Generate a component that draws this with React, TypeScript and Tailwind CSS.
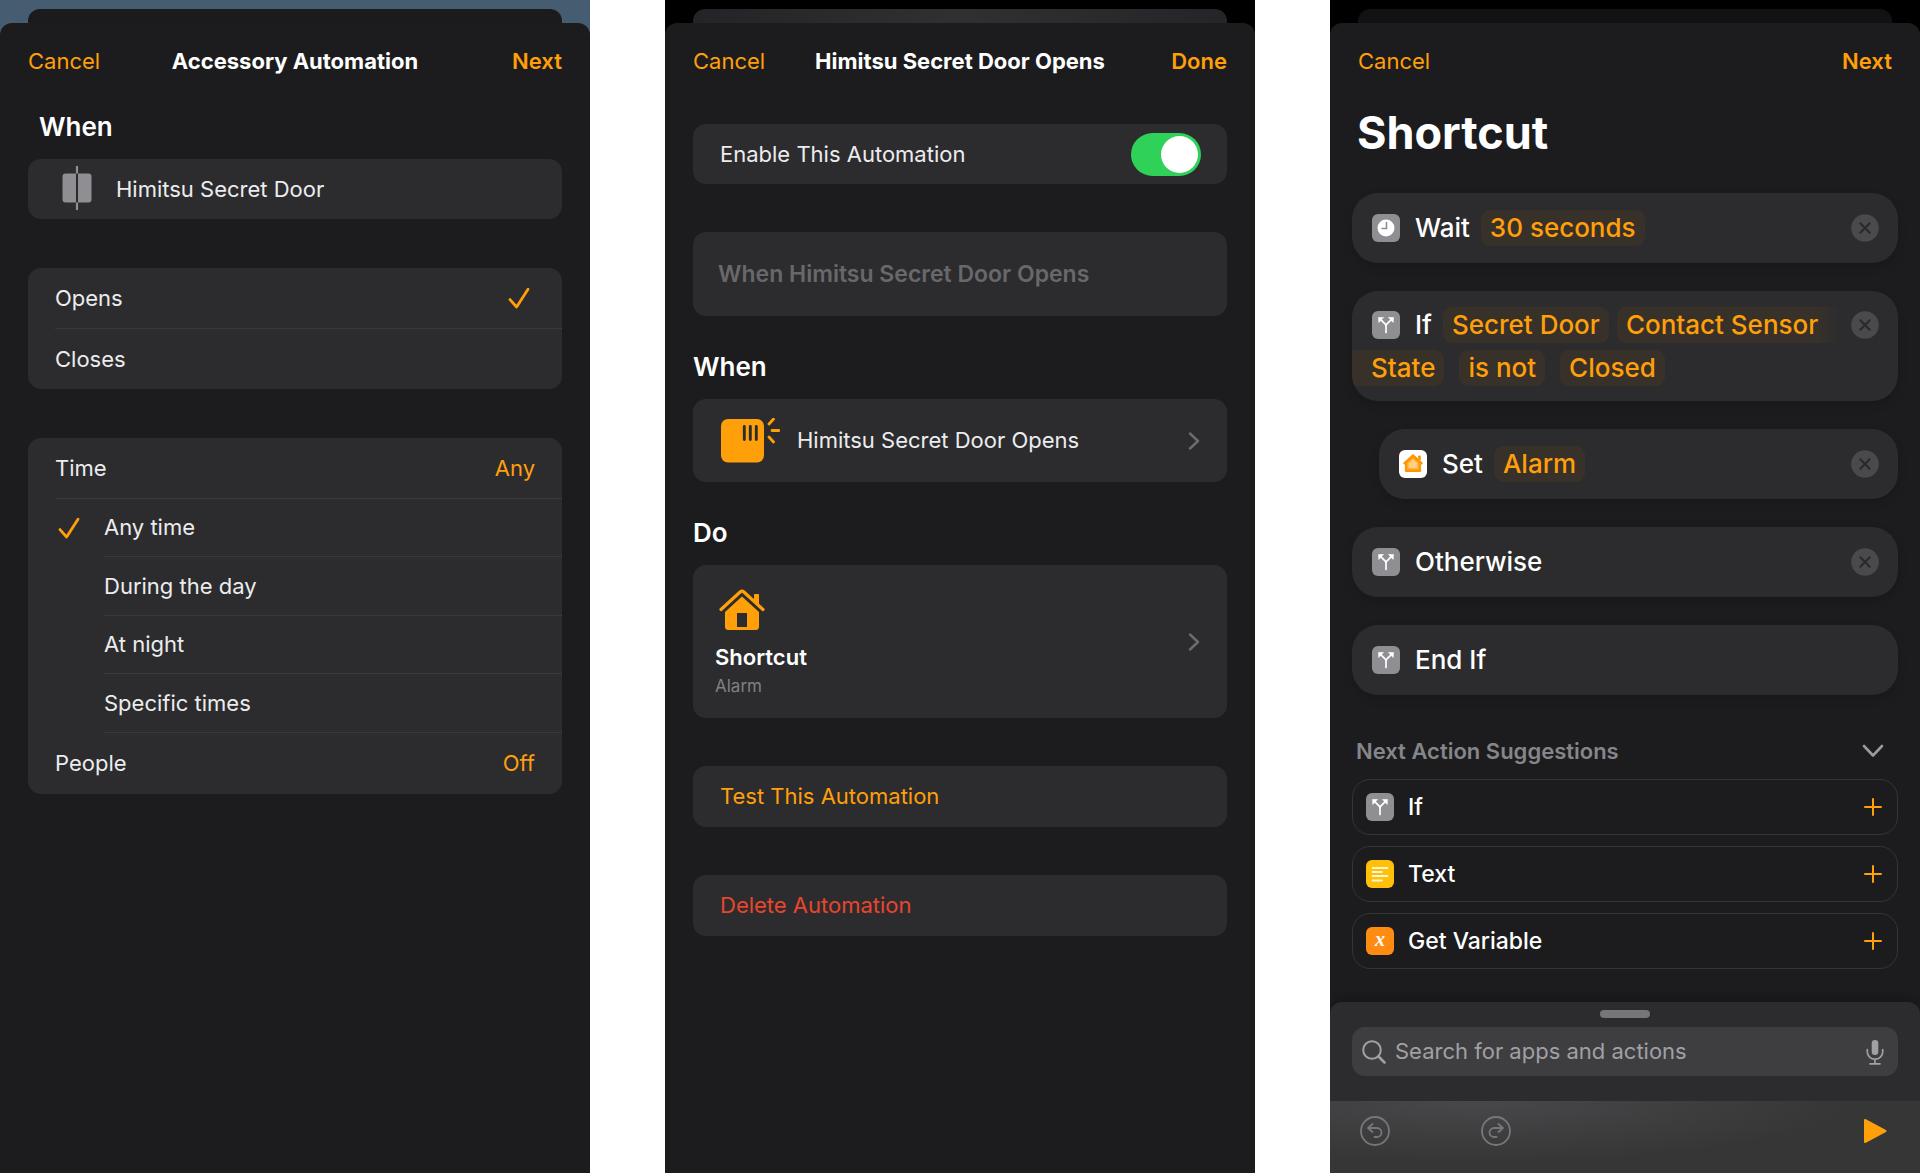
import type { ReactNode } from 'react'

type Backdrop = 'blue' | 'slate' | 'black'

const backdropStyles: Record<Backdrop, { page: string; behind: string }> = {
  blue: { page: 'bg-[#465c70]', behind: 'bg-[#1b1b1d]' },
  slate: { page: 'bg-black', behind: 'bg-linear-to-r from-[#232427] via-[#303031] to-[#232528]' },
  black: { page: 'bg-black', behind: 'bg-[#121213]' },
}

function Phone({ backdrop, children }: { backdrop: Backdrop; children: ReactNode }) {
  const style = backdropStyles[backdrop]
  return (
    <section className={`flex min-h-screen flex-col pt-[9px] ${style.page}`}>
      <div className={`mx-7 h-[14px] rounded-t-xl ${style.behind}`} />
      <div className="flex flex-1 flex-col rounded-t-xl bg-[#1c1c1e]">{children}</div>
    </section>
  )
}

function SheetHeader({ title, action }: { title?: string; action: string }) {
  return (
    <header className="grid h-[76px] grid-cols-[1fr_auto_1fr] items-center px-7 text-[22px]">
      <button className="justify-self-start text-[#ff9f0a]">Cancel</button>
      <h1 className="font-bold text-white">{title}</h1>
      <button className="justify-self-end font-semibold text-[#ff9f0a]">{action}</button>
    </header>
  )
}

function Card({ className = '', children }: { className?: string; children: ReactNode }) {
  return <div className={`overflow-hidden rounded-[13px] bg-[#2c2c2e] ${className}`}>{children}</div>
}

function CheckIcon({ className = '' }: { className?: string }) {
  return (
    <svg viewBox="0 0 22 22" className={`size-[22px] shrink-0 ${className}`} fill="none" stroke="#ff9f0a" strokeWidth="2.8" strokeLinecap="round" strokeLinejoin="round" aria-hidden="true">
      <path d="M2 12.6 8.600 20 20 2.200" />
    </svg>
  )
}

function ChevronRight() {
  return (
    <svg viewBox="0 0 12 18" className="h-[18px] w-3 shrink-0" fill="none" stroke="#6c6c70" strokeWidth="2.4" strokeLinecap="round" strokeLinejoin="round" aria-hidden="true">
      <path d="M2 1.5 10 9l-8 7.500" />
    </svg>
  )
}

function DoorIcon() {
  return (
    <svg viewBox="0 0 30 50" className="h-[50px] w-[30px] shrink-0" aria-hidden="true">
      <path d="M3.500 9.500H14v29H3.500a3 3 0 0 1-3-3v-23a3 3 0 0 1 3-3ZM16 9.500h10.500a3 3 0 0 1 3 3v23a3 3 0 0 1-3 3H16Z" fill="#8e8e93" />
      <path d="M15 2v7.500M15 38.500V46" stroke="#8e8e93" strokeWidth="2.200" />
    </svg>
  )
}

function SensorIcon() {
  return (
    <svg viewBox="0 0 60 46" className="h-[46px] w-[60px] shrink-0" aria-hidden="true">
      <rect x="1" y="1" width="43" height="43.500" rx="7" fill="#ff9f0a" />
      <path d="M24.300 8.500v13M30.300 8.500v13M36.300 8.500v13" stroke="#2c2c2e" strokeWidth="2.900" strokeLinecap="round" />
      <path d="m49 6 4.500-5M52 12.500h7M49 19l4.500 5" stroke="#ff9f0a" strokeWidth="2.800" strokeLinecap="round" />
    </svg>
  )
}

function HouseIcon() {
  return (
    <svg viewBox="0 0 46 42" className="h-[42px] w-[46px]" aria-hidden="true">
      <path d="M2 20.500 21.400 2.800a2.400 2.400 0 0 1 3.200 0L44 20.500" fill="none" stroke="#ff9f0a" strokeWidth="3.200" strokeLinecap="round" strokeLinejoin="round" />
      <path d="M35.500 5.500h4V17l-4-3.700Z" fill="#ff9f0a" stroke="#ff9f0a" strokeLinejoin="round" />
      <path fillRule="evenodd" d="M23 7.500 40 23v14.500a3.500 3.500 0 0 1-3.500 3.500h-27A3.500 3.500 0 0 1 6 37.500V23ZM18 24v14h10V24Z" fill="#ff9f0a" />
    </svg>
  )
}

function Tile({ className, children }: { className: string; children: ReactNode }) {
  return (
    <svg viewBox="0 0 28 28" className={`size-7 shrink-0 rounded-md ${className}`} aria-hidden="true">
      {children}
    </svg>
  )
}

function ClockTile() {
  return (
    <Tile className="bg-[#8e8e93]">
      <circle cx="14" cy="14" r="8.500" fill="#fff" />
      <path d="M14.500 8.500v6H10" fill="none" stroke="#8e8e93" strokeWidth="1.600" strokeLinecap="round" />
    </Tile>
  )
}

function BranchTile() {
  return (
    <Tile className="bg-[#8e8e93]">
      <path d="M14 21.500v-6.300c0-1-.4-1.800-1-2.400L9 8.800M14 15.200c0-1 .4-1.800 1-2.400l4-4" fill="none" stroke="#fff" strokeWidth="1.700" strokeLinecap="round" />
      <path d="M6.500 6.500h5l-4.700 5ZM21.500 6.500h-5l4.700 5Z" fill="#fff" stroke="#fff" strokeWidth=".6" strokeLinejoin="round" />
    </Tile>
  )
}

function HomeTile() {
  return (
    <Tile className="bg-white">
      <path d="M14 4.500 23.500 13l-1 1.200h-.9v7.300H6.400v-7.300h-.9l-1-1.200ZM19.500 6h1.800v4l-1.800-1.500Z" fill="#ff9500" stroke="#ff9500" strokeLinejoin="round" />
      <path d="m14 7.800 5.800 5.200v6.500H8.200V13Z" fill="#ffb340" />
      <path d="m14 9.500 4.300 4v4.500H9.700v-4.500Z" fill="#ffd080" />
    </Tile>
  )
}

function TextTile() {
  return (
    <Tile className="bg-[#ffc00a]">
      <path d="M6.500 8h15M6.500 12h9.500M6.500 16h15M6.500 20.500h9.500" stroke="#fff5cf" strokeWidth="1.800" strokeLinecap="round" />
    </Tile>
  )
}

function VariableTile() {
  return (
    <span className="flex size-7 shrink-0 items-center justify-center rounded-md bg-[#ff8c12] pb-1 font-['Liberation_Serif',serif] text-[20px] leading-none font-bold text-white italic">
      x
    </span>
  )
}

function CloseButton({ label }: { label: string }) {
  return (
    <button aria-label={label} className="ml-auto size-7 shrink-0">
      <svg viewBox="0 0 28 28" className="size-7" aria-hidden="true">
        <circle cx="14" cy="14" r="13.800" fill="#4a4a4d" />
        <path d="m9.300 9.300 9.400 9.400M18.700 9.300l-9.400 9.400" stroke="#29292b" strokeWidth="2" strokeLinecap="round" />
      </svg>
    </button>
  )
}

function SectionTitle({ className = '', children }: { className?: string; children: ReactNode }) {
  return <h2 className={`mb-4 text-[26px] leading-8 font-semibold text-white ${className}`}>{children}</h2>
}

function AccessoryAutomation() {
  return (
    <Phone backdrop="blue">
      <SheetHeader title="Accessory Automation" action="Next" />
      <main className="px-7 text-[22px] text-[#ececee]">
        <SectionTitle className="mt-3 ml-[11px]">When</SectionTitle>
        <Card className="flex h-[60px] items-center gap-6 pl-[34px]">
          <DoorIcon />
          <span>Himitsu Secret Door</span>
        </Card>

        <Card className="mt-[49px] pl-[27px]">
          {['Opens', 'Closes'].map((name) => (
            <label key={name} className="flex h-[60px] items-center justify-between border-[#39393b] pr-7 not-first:h-[61px] not-first:border-t">
              {name}
              <input type="radio" name="trigger" defaultChecked={name === 'Opens'} className="peer sr-only" />
              <CheckIcon className="invisible mr-1 peer-checked:visible" />
            </label>
          ))}
        </Card>

        <Card className="mt-[49px] pl-[27px]">
          <div className="flex h-[61px] items-center justify-between border-b border-[#39393b] pr-[27px]">
            <span>Time</span>
            <button className="text-[#ff9f0a]">Any</button>
          </div>
          {['Any time', 'During the day', 'At night', 'Specific times'].map((name) => (
            <label key={name} className="flex h-[59px] items-center even:h-[58px]">
              <input type="radio" name="time" defaultChecked={name === 'Any time'} className="peer sr-only" />
              <CheckIcon className="invisible ml-[3px] peer-checked:visible" />
              <span className="ml-6 flex h-full flex-1 items-center border-b border-[#39393b]">{name}</span>
            </label>
          ))}
          <div className="flex h-[61px] items-center justify-between pr-[27px]">
            <span>People</span>
            <button className="text-[#ff9f0a]">Off</button>
          </div>
        </Card>
      </main>
    </Phone>
  )
}

function AutomationDetails() {
  return (
    <Phone backdrop="slate">
      <SheetHeader title="Himitsu Secret Door Opens" action="Done" />
      <main className="px-7 pt-[25px] text-[22px] text-[#ececee]">
        <Card>
          <label className="flex h-[60px] items-center justify-between pr-[26px] pl-[27px]">
            Enable This Automation
            <input type="checkbox" role="switch" defaultChecked className="peer sr-only" />
            <span className="flex h-[43px] w-[70px] items-center justify-end rounded-full bg-[#30d158] p-[3px]">
              <span className="size-[37px] rounded-full bg-white" />
            </span>
          </label>
        </Card>

        <Card className="mt-12">
          <input
            aria-label="Automation name"
            placeholder="When Himitsu Secret Door Opens"
            className="block h-[84px] w-full bg-transparent px-[25px] text-[23px] font-semibold outline-none placeholder:text-[#68686b]"
          />
        </Card>

        <SectionTitle className="mt-[35px]">When</SectionTitle>
        <Card>
          <button className="flex h-[83px] w-full items-center pr-[27px] pl-[27px] text-left">
            <SensorIcon />
            <span className="ml-[17px] flex-1">Himitsu Secret Door Opens</span>
            <ChevronRight />
          </button>
        </Card>

        <SectionTitle className="mt-[35px]">Do</SectionTitle>
        <Card>
          <button className="flex h-[153px] w-full items-center justify-between pr-[27px] pl-[22px] text-left">
            <span className="flex flex-col pt-1">
              <span className="ml-1">
                <HouseIcon />
              </span>
              <span className="mt-[10px] leading-8 font-semibold text-white">Shortcut</span>
              <span className="text-[17px] leading-[26px] text-[#808084]">Alarm</span>
            </span>
            <ChevronRight />
          </button>
        </Card>

        <Card className="mt-12">
          <button className="block h-[61px] w-full px-[27px] text-left text-[#ff9f0a]">Test This Automation</button>
        </Card>
        <Card className="mt-12">
          <button className="block h-[61px] w-full px-[27px] text-left text-[#e8452f]">Delete Automation</button>
        </Card>
      </main>
    </Phone>
  )
}

function Chip({ className = 'rounded-[9px] bg-[#38312a] px-[9px]', children }: { className?: string; children: ReactNode }) {
  return <button className={`h-9 shrink-0 leading-9 whitespace-nowrap text-[#ff9f0a] ${className}`}>{children}</button>
}

function Action({ className = 'py-[17px]', children }: { className?: string; children: ReactNode }) {
  return (
    <li className={`overflow-hidden rounded-[26px] bg-[#2c2c2e] pr-[19px] pl-5 leading-9 shadow-[0_4px_10px_rgba(0,0,0,0.15)] ${className}`}>
      {children}
    </li>
  )
}

const suggestions = [
  { name: 'If', tile: <BranchTile /> },
  { name: 'Text', tile: <TextTile /> },
  { name: 'Get Variable', tile: <VariableTile /> },
]

function ShortcutEditor() {
  return (
    <Phone backdrop="black">
      <SheetHeader action="Next" />
      <main className="px-[22px]">
        <h2 className="mb-[26px] ml-[5px] text-[45px] leading-[68px] font-bold text-white">Shortcut</h2>

        <ul className="flex flex-col gap-7 text-[26px] font-medium text-white">
          <Action>
            <div className="flex h-9 items-center">
              <ClockTile />
              <span className="mr-[11px] ml-[15px]">Wait</span>
              <Chip>30 seconds</Chip>
              <CloseButton label="Remove Wait" />
            </div>
          </Action>
          <Action className="pt-4 pb-[15px]">
            <div className="flex h-9 items-center">
              <BranchTile />
              <span className="mr-[11px] ml-[15px]">If</span>
              <Chip>Secret Door</Chip>
              <Chip className="ml-2 flex-1 rounded-l-[9px] bg-linear-to-r from-[#38312a] from-90% to-[#2c2c2e] px-[9px] text-left">
                Contact Sensor
              </Chip>
              <span className="w-3" />
              <CloseButton label="Remove If" />
            </div>
            <div className="mt-[7px] -ml-5 flex items-center gap-[15px]">
              <Chip className="rounded-r-[9px] bg-[#38312a] pr-[9px] pl-[19px]">State</Chip>
              <Chip>is not</Chip>
              <Chip>Closed</Chip>
            </div>
          </Action>
          <Action className="ml-[27px] py-[17px]">
            <div className="flex h-9 items-center">
              <HomeTile />
              <span className="mr-[11px] ml-[15px]">Set</span>
              <Chip>Alarm</Chip>
              <CloseButton label="Remove Set" />
            </div>
          </Action>
          <Action>
            <div className="flex h-9 items-center">
              <BranchTile />
              <span className="ml-[15px]">Otherwise</span>
              <CloseButton label="Remove Otherwise" />
            </div>
          </Action>
          <Action>
            <div className="flex h-9 items-center">
              <BranchTile />
              <span className="ml-[15px]">End If</span>
            </div>
          </Action>
        </ul>

        <button className="mt-10 mb-3 flex h-8 w-full items-center justify-between pr-[14px] pl-1 text-[22px] font-semibold text-[#86868a]">
          Next Action Suggestions
          <svg viewBox="0 0 22 14" className="h-[14px] w-[22px]" fill="none" stroke="#9a9a9e" strokeWidth="2.600" strokeLinecap="round" strokeLinejoin="round" aria-hidden="true">
            <path d="M2 2l9 9.500L20 2" />
          </svg>
        </button>
        <ul className="flex flex-col gap-[11px] text-[23px] font-medium text-white">
          {suggestions.map(({ name, tile }) => (
            <li key={name}>
              <button className="flex h-14 w-full items-center gap-[14px] rounded-[18px] border border-[#343436] pr-[15px] pl-[13px] text-left">
                {tile}
                <span className="flex-1">{name}</span>
                <svg viewBox="0 0 18 18" className="size-[18px]" stroke="#ff9f0a" strokeWidth="2" strokeLinecap="round" aria-hidden="true">
                  <path d="M9 1v16M1 9h16" />
                </svg>
              </button>
            </li>
          ))}
        </ul>
      </main>

      <footer className="mt-auto rounded-t-xl bg-[#2c2c2e] pt-2 shadow-[0_-4px_12px_rgba(0,0,0,0.2)] [clip-path:inset(-12px_0_0_0)]">
        <div className="mx-auto h-2 w-[50px] rounded-full bg-[#767678]" />
        <label className="mx-[22px] mt-[9px] mb-[25px] flex h-[49px] items-center rounded-[13px] bg-[#3e3e40] pr-[14px] pl-2.5">
          <svg viewBox="0 0 24 24" className="size-6 shrink-0" fill="none" stroke="#a0a0a5" strokeWidth="2" strokeLinecap="round" aria-hidden="true">
            <circle cx="10" cy="10" r="8.800" />
            <path d="m16.500 16.500 6 6" strokeWidth="2.500" />
          </svg>
          <input
            type="search"
            aria-label="Search for apps and actions"
            placeholder="Search for apps and actions"
            className="ml-[9px] min-w-0 flex-1 bg-transparent text-[22px] outline-none placeholder:text-[#a0a0a5]"
          />
          <svg viewBox="0 0 18 26" className="h-[26px] w-[18px] shrink-0" fill="none" stroke="#a0a0a5" strokeWidth="1.700" strokeLinecap="round" aria-hidden="true">
            <rect x="5.700" y="1" width="6.600" height="15" rx="3.300" fill="#a0a0a5" stroke="none" />
            <path d="M1.300 10.500V13a7.700 7.200 0 0 0 15.400 0v-2.500M9 20.200v4.500M4 24.800h10" />
          </svg>
        </label>
        <div className="flex h-[72px] items-center bg-[#38383a] bg-radial-[at_25%_0%] from-[#48484a] to-[#363637] to-60% pr-[33px] pb-3 pl-[30px]">
          <button aria-label="Undo">
            <svg viewBox="0 0 30 30" className="size-[30px]" fill="none" stroke="#77777a" strokeWidth="1.800" strokeLinecap="round" strokeLinejoin="round" aria-hidden="true">
              <circle cx="15" cy="15" r="14" />
              <path d="M12.500 8 8 12l4.500 4M8.500 12H17a4.500 4.500 0 0 1 0 9h-2.500" />
            </svg>
          </button>
          <button aria-label="Redo" className="ml-[91px]">
            <svg viewBox="0 0 30 30" className="size-[30px]" fill="none" stroke="#77777a" strokeWidth="1.800" strokeLinecap="round" strokeLinejoin="round" aria-hidden="true">
              <circle cx="15" cy="15" r="14" />
              <path d="m17.500 8 4.500 4-4.500 4M21.500 12H13a4.500 4.500 0 0 0 0 9h2.500" />
            </svg>
          </button>
          <button aria-label="Run shortcut" className="ml-auto">
            <svg viewBox="0 0 24 26" className="h-[26px] w-6" aria-hidden="true">
              <path d="M2 2v22l20.500-11Z" fill="#ff9f0a" stroke="#ff9f0a" strokeWidth="2" strokeLinejoin="round" />
            </svg>
          </button>
        </div>
      </footer>
    </Phone>
  )
}

export default function App() {
  return (
    <div className="grid min-h-screen grid-cols-3 gap-[75px] bg-white font-['Inter',sans-serif]">
      <AccessoryAutomation />
      <AutomationDetails />
      <ShortcutEditor />
    </div>
  )
}
